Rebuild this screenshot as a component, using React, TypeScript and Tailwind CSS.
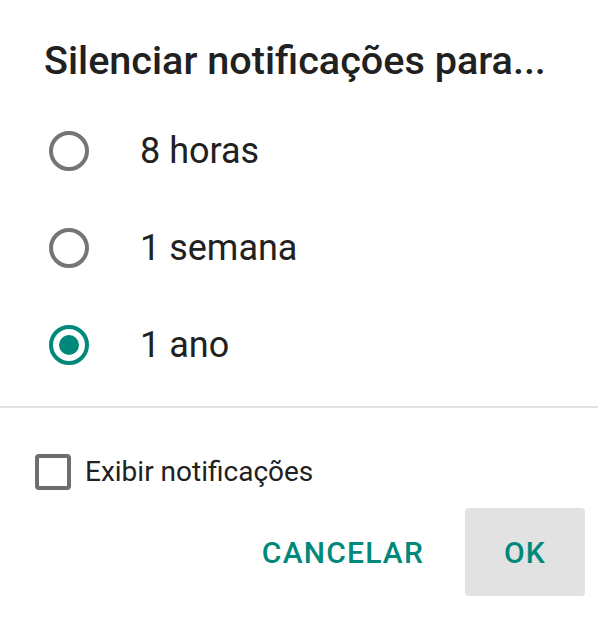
import React from "react";

function Radio({ checked }: { checked?: boolean }) {
  return (
    <svg width="40" height="40" viewBox="0 0 40 40" className="shrink-0">
      <circle
        cx="20"
        cy="20"
        r="18"
        fill="none"
        stroke={checked ? "#00897b" : "#757575"}
        strokeWidth="4"
      />
      {checked && <circle cx="20" cy="20" r="10" fill="#00897b" />}
    </svg>
  );
}

export default function App() {
  const options = [
    { label: "8 horas", checked: false },
    { label: "1 semana", checked: false },
    { label: "1 ano", checked: true },
  ];
  return (
    <div
      className="w-[598px] h-[622px] bg-white overflow-hidden"
      style={{ fontFamily: "Roboto, 'Noto Sans', sans-serif" }}
    >
      <h1 className="pt-[38px] pl-[44px] text-[39.6px] leading-[46px] font-medium text-[#212121] whitespace-nowrap">
        Silenciar notificações para...
      </h1>
      <div className="mt-[18px]">
        {options.map((o) => (
          <div key={o.label} className="h-[97px] flex items-center pl-[49px]">
            <Radio checked={o.checked} />
            <span className="ml-[51px] text-[36px] leading-[36px] text-[#212121]">
              {o.label}
            </span>
          </div>
        ))}
      </div>
      <div className="mt-[13px] h-[2px] bg-[#e0e0e0]" />
      <div className="mt-[46px] flex items-center pl-[35px] h-[36px]">
        <div className="w-[36px] h-[36px] rounded-[4px] border-[4px] border-[#6e6e6e]" />
        <span className="ml-[14px] text-[28px] leading-[28px] text-[#212121]">
          Exibir notificações
        </span>
      </div>
      <div className="mt-[18px] flex justify-end pr-[13px] gap-[21px]">
        <button className="h-[88px] px-[20px] text-[30px] tracking-[1.2px] font-medium text-[#00897b] rounded-[4px]">
          CANCELAR
        </button>
        <button className="h-[88px] w-[120px] text-[30px] tracking-[1.2px] font-medium text-[#00897b] bg-[#e2e2e2] rounded-[4px]">
          OK
        </button>
      </div>
    </div>
  );
}
